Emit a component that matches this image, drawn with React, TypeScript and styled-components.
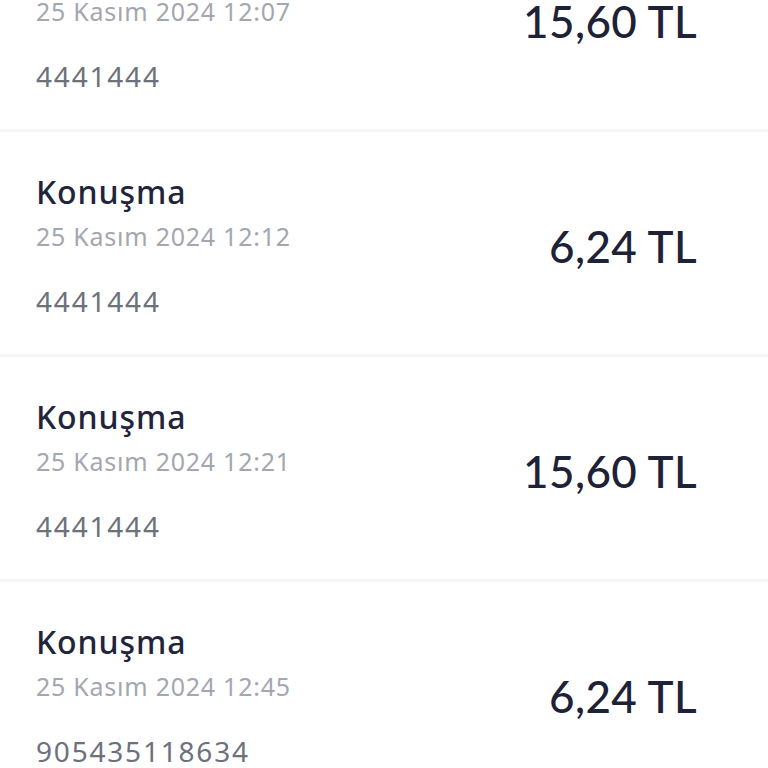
import styled, { createGlobalStyle } from "styled-components";

const GlobalStyle = createGlobalStyle`
  html, body {
    margin: 0;
    padding: 0;
    background: #ffffff;
    overflow: hidden;
  }
  body {
    font-family: "Noto Sans", Lato, sans-serif;
  }
`;

const List = styled.div`
  display: flex;
  flex-direction: column;
  margin-top: -93px;
`;

const Row = styled.div`
  display: flex;
  align-items: center;
  justify-content: space-between;
  height: 225px;
  box-sizing: border-box;
  padding: 0 71px 0 36px;
  border-bottom: 3px solid #f4f5f7;
`;

const Info = styled.div`
  display: flex;
  flex-direction: column;
  padding-top: 4px;
`;

const Title = styled.span`
  font-size: 32px;
  line-height: 40px;
  font-weight: 500;
  letter-spacing: 0.9px;
  color: #22253a;
`;

const Date = styled.span`
  margin-top: 6px;
  font-size: 25px;
  line-height: 36px;
  letter-spacing: 0.75px;
  color: #a3a7af;
`;

const Number = styled.span`
  margin-top: 29px;
  font-size: 28px;
  line-height: 36px;
  letter-spacing: 1.8px;
  color: #6c717b;
`;

const Amount = styled.span`
  padding-top: 6px;
  font-family: Lato, "Noto Sans", sans-serif;
  font-size: 44px;
  line-height: 52px;
  font-weight: 500;
  letter-spacing: 0.4px;
  color: #1e2236;
`;

interface ICall {
  date: string;
  number: string;
  amount: string;
}

const calls: ICall[] = [
  { date: "25 Kasım 2024 12:07", number: "4441444", amount: "15,60 TL" },
  { date: "25 Kasım 2024 12:12", number: "4441444", amount: "6,24 TL" },
  { date: "25 Kasım 2024 12:21", number: "4441444", amount: "15,60 TL" },
  { date: "25 Kasım 2024 12:45", number: "905435118634", amount: "6,24 TL" },
];

export default function App() {
  return (
    <>
      <GlobalStyle />
      <List>
        {calls.map((call) => (
          <Row key={call.date}>
            <Info>
              <Title>Konuşma</Title>
              <Date>{call.date}</Date>
              <Number>{call.number}</Number>
            </Info>
            <Amount>{call.amount}</Amount>
          </Row>
        ))}
      </List>
    </>
  );
}
